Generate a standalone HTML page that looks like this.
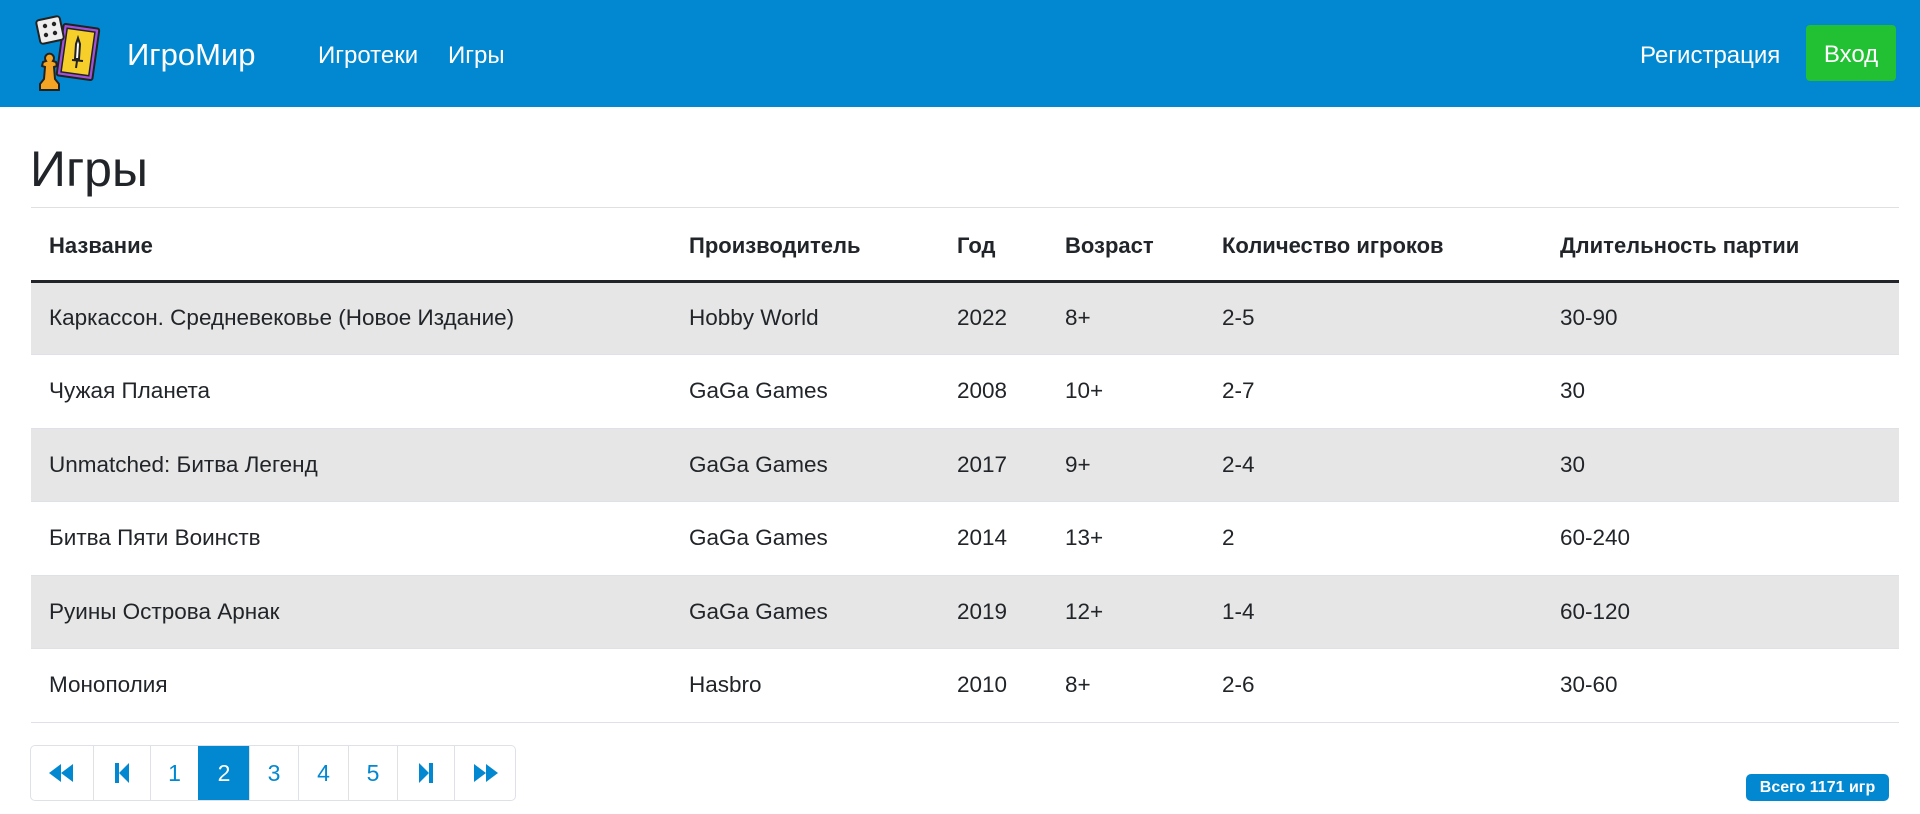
<!DOCTYPE html>
<html><head><meta charset="utf-8"><style>
*{box-sizing:border-box;margin:0;padding:0}
body{width:1920px;height:814px;overflow:hidden;background:#fff;font-family:"Liberation Sans",sans-serif;color:#212529}
.nav{position:absolute;left:0;top:0;width:1920px;height:107px;background:#0288d1;color:#fff}
.brand{position:absolute;left:127px;top:37px;font-size:31px}
.nl{position:absolute;top:42px;font-size:24px}
.btn{position:absolute;left:1806px;top:25px;width:90px;height:56px;background:#22c033;border-radius:4px;color:#fff;font-size:24px;display:flex;align-items:center;justify-content:center;padding-top:4px}
h1{position:absolute;left:30px;top:140px;font-size:50px;font-weight:300}
.hr{position:absolute;left:31px;top:207px;width:1868px;height:1px;background:#e0e0e0}
table{position:absolute;left:31px;top:212px;width:1868px;border-collapse:collapse;font-size:22.5px}
th{text-align:left;font-weight:bold;height:69px;border-bottom:3px solid #212529;padding-left:18px;font-size:22px}
td{height:73.5px;padding-left:18px;border-bottom:1px solid #dee2e6}
tr.s td{background:#e6e6e6}
.pg{position:absolute;left:30px;top:745px;height:56px;display:flex;border:1px solid #dee2e6;border-radius:5px;overflow:hidden}
.pg div{height:54px;border-left:1px solid #dee2e6;color:#0288d1;font-size:23px;display:flex;align-items:center;justify-content:center}
.pg div:first-child{border-left:none}
.pg .a{background:#0288d1;color:#fff;border-color:#0288d1}
.badge{position:absolute;left:1746px;top:774px;width:143px;height:27px;background:#0288d1;color:#fff;border-radius:5px;font-weight:bold;font-size:16px;text-align:center;line-height:27px}
</style></head><body>
<div class="nav">
<svg style="position:absolute;left:34px;top:14px" width="70" height="78" viewBox="0 0 70 78">
<rect x="26" y="12" width="36" height="52" rx="2" transform="rotate(8 44 38)" fill="#a052d8" stroke="#222" stroke-width="2"/>
<rect x="30" y="16" width="28" height="44" transform="rotate(8 44 38)" fill="#f7cf2b" stroke="#222" stroke-width="1.5"/>
<path d="M44 24 L46 30 L45 45 L41 45 L42 30Z M38 46 L49 47 M43 47 L42 54" stroke="#222" stroke-width="2" fill="#fff"/>
<rect x="4" y="4" width="24" height="24" rx="3" transform="rotate(-12 16 16)" fill="#eee" stroke="#222" stroke-width="2"/>
<circle cx="11" cy="12" r="2.2" fill="#222"/><circle cx="20" cy="10" r="2.2" fill="#222"/><circle cx="12" cy="21" r="2.2" fill="#222"/><circle cx="21" cy="19" r="2.2" fill="#222"/>
<path d="M6 76 L6 70 L10 65 L11 53 L8 52 L9 48 L12 47 A4.5 4.5 0 1 1 19 47 L22 48 L23 52 L20 53 L21 65 L25 70 L25 76Z" fill="#f5a524" stroke="#222" stroke-width="2"/>
</svg>
<div class="brand">ИгроМир</div>
<div class="nl" style="left:318px">Игротеки</div>
<div class="nl" style="left:448px">Игры</div>
<div class="nl" style="left:1640px">Регистрация</div>
<div class="btn">Вход</div>
</div>
<h1>Игры</h1>
<div class="hr"></div>
<table>
<colgroup><col style="width:640px"><col style="width:268px"><col style="width:108px"><col style="width:157px"><col style="width:338px"><col></colgroup>
<tr><th>Название</th><th>Производитель</th><th>Год</th><th>Возраст</th><th>Количество игроков</th><th>Длительность партии</th></tr>
<tr class="s"><td>Каркассон. Средневековье (Новое Издание)</td><td>Hobby World</td><td>2022</td><td>8+</td><td>2-5</td><td>30-90</td></tr>
<tr><td>Чужая Планета</td><td>GaGa Games</td><td>2008</td><td>10+</td><td>2-7</td><td>30</td></tr>
<tr class="s"><td>Unmatched: Битва Легенд</td><td>GaGa Games</td><td>2017</td><td>9+</td><td>2-4</td><td>30</td></tr>
<tr><td>Битва Пяти Воинств</td><td>GaGa Games</td><td>2014</td><td>13+</td><td>2</td><td>60-240</td></tr>
<tr class="s"><td>Руины Острова Арнак</td><td>GaGa Games</td><td>2019</td><td>12+</td><td>1-4</td><td>60-120</td></tr>
<tr><td>Монополия</td><td>Hasbro</td><td>2010</td><td>8+</td><td>2-6</td><td>30-60</td></tr>
</table>
<div class="pg">
<div style="width:62px"><svg width="26" height="18" viewBox="0 0 26 18"><path d="M0 9L12 0V18Z M12 9L24 0V18Z" fill="#0288d1"/></svg></div>
<div style="width:57px"><svg width="18" height="20" viewBox="0 0 18 20"><rect x="2" y="0" width="4" height="20" fill="#0288d1"/><path d="M6 10L16 0V20Z" fill="#0288d1"/></svg></div>
<div style="width:48px">1</div>
<div class="a" style="width:51px">2</div>
<div style="width:49px">3</div>
<div style="width:50px">4</div>
<div style="width:49px">5</div>
<div style="width:57px"><svg width="18" height="20" viewBox="0 0 18 20"><rect x="12" y="0" width="4" height="20" fill="#0288d1"/><path d="M12 10L2 0V20Z" fill="#0288d1"/></svg></div>
<div style="width:61px"><svg width="26" height="18" viewBox="0 0 26 18"><path d="M26 9L14 0V18Z M14 9L2 0V18Z" fill="#0288d1"/></svg></div>
</div>
<div class="badge">Всего 1171 игр</div>
</body></html>
